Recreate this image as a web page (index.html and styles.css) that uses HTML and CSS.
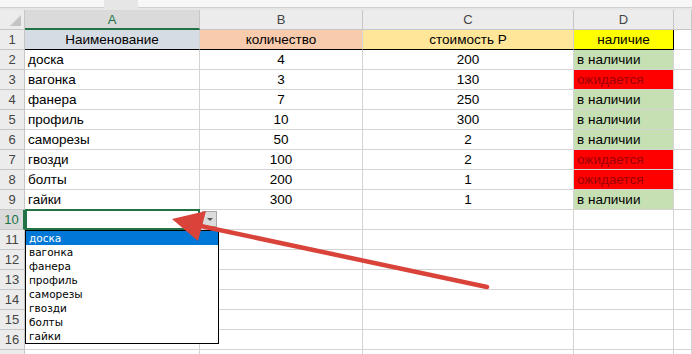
FILE: index.html
```html
<!DOCTYPE html>
<html>
<head>
  <title>Материалы</title>
  <link rel="stylesheet" href="styles.css">
</head>
<body>
  <div class="formula-bar">
    <div class="name-box"></div>
    <div class="formula-input"></div>
  </div>

  <div class="sheet">
    <!-- column headers -->
    <div class="corner"><span class="select-all"></span></div>
    <div class="col-head selected">A</div>
    <div class="col-head">B</div>
    <div class="col-head">C</div>
    <div class="col-head">D</div>
    <div class="col-head"></div>

    <div class="row-head">1</div>
    <div class="cell center head-a">Наименование</div>
    <div class="cell center head-b">количество</div>
    <div class="cell center head-c">стоимость Р</div>
    <div class="cell center head-d">наличие</div>
    <div class="cell"></div>

    <div class="row-head">2</div>
    <div class="cell">доска</div>
    <div class="cell center">4</div>
    <div class="cell center">200</div>
    <div class="cell ok">в наличии</div>
    <div class="cell"></div>

    <div class="row-head">3</div>
    <div class="cell">вагонка</div>
    <div class="cell center">3</div>
    <div class="cell center">130</div>
    <div class="cell wait">ожидается</div>
    <div class="cell"></div>

    <div class="row-head">4</div>
    <div class="cell">фанера</div>
    <div class="cell center">7</div>
    <div class="cell center">250</div>
    <div class="cell ok">в наличии</div>
    <div class="cell"></div>

    <div class="row-head">5</div>
    <div class="cell">профиль</div>
    <div class="cell center">10</div>
    <div class="cell center">300</div>
    <div class="cell ok">в наличии</div>
    <div class="cell"></div>

    <div class="row-head">6</div>
    <div class="cell">саморезы</div>
    <div class="cell center">50</div>
    <div class="cell center">2</div>
    <div class="cell ok">в наличии</div>
    <div class="cell"></div>

    <div class="row-head">7</div>
    <div class="cell">гвозди</div>
    <div class="cell center">100</div>
    <div class="cell center">2</div>
    <div class="cell wait">ожидается</div>
    <div class="cell"></div>

    <div class="row-head">8</div>
    <div class="cell">болты</div>
    <div class="cell center">200</div>
    <div class="cell center">1</div>
    <div class="cell wait">ожидается</div>
    <div class="cell"></div>

    <div class="row-head">9</div>
    <div class="cell">гайки</div>
    <div class="cell center">300</div>
    <div class="cell center">1</div>
    <div class="cell ok">в наличии</div>
    <div class="cell"></div>

    <div class="row-head selected">10</div>
    <div class="cell active"></div>
    <div class="cell"></div>
    <div class="cell"></div>
    <div class="cell"></div>
    <div class="cell"></div>

    <div class="row-head">11</div>
    <div class="cell"></div><div class="cell"></div><div class="cell"></div><div class="cell"></div><div class="cell"></div>
    <div class="row-head">12</div>
    <div class="cell"></div><div class="cell"></div><div class="cell"></div><div class="cell"></div><div class="cell"></div>
    <div class="row-head">13</div>
    <div class="cell"></div><div class="cell"></div><div class="cell"></div><div class="cell"></div><div class="cell"></div>
    <div class="row-head">14</div>
    <div class="cell"></div><div class="cell"></div><div class="cell"></div><div class="cell"></div><div class="cell"></div>
    <div class="row-head">15</div>
    <div class="cell"></div><div class="cell"></div><div class="cell"></div><div class="cell"></div><div class="cell"></div>
    <div class="row-head">16</div>
    <div class="cell"></div><div class="cell"></div><div class="cell"></div><div class="cell"></div><div class="cell"></div>
    <div class="row-head"></div>
    <div class="cell"></div><div class="cell"></div><div class="cell"></div><div class="cell"></div><div class="cell"></div>

    <!-- validation dropdown on A10 -->
    <div class="drop-btn"><span class="caret"></span></div>
    <ul class="drop-list">
      <li class="hover">доска</li>
      <li>вагонка</li>
      <li>фанера</li>
      <li>профиль</li>
      <li>саморезы</li>
      <li>гвозди</li>
      <li>болты</li>
      <li>гайки</li>
    </ul>
  </div>

  <svg class="arrow" width="692" height="354" viewBox="0 0 692 354">
    <line x1="487" y1="287" x2="196" y2="225" stroke="#d9433a" stroke-width="4.5" stroke-linecap="round"/>
    <polygon points="172,219 206,211 198,241" fill="#d9433a"/>
  </svg>
</body>
</html>
```

FILE: styles.css
```css
body {
  margin: 0;
  background: #fff;
  font-family: "Liberation Sans", Arial, sans-serif;
  overflow: hidden;
}

.formula-bar {
  height: 10px;
  background: #e6e6e6;
  display: flex;
  gap: 34px;
}

.name-box,
.formula-input {
  height: 7px;
  background: #f7f7f7;
  border-bottom: 1px solid #d0d0d0;
}

.name-box {
  width: 104px;
}

.formula-input {
  flex: 1;
}

.sheet {
  position: relative;
  display: grid;
  grid-template-columns: 25px 175px 163px 211px 100px 1fr;
  grid-auto-rows: 20px;
  font-size: 13.5px;
  color: #000;
}

.corner,
.col-head,
.row-head {
  background: #ececec;
  color: #444;
  font-size: 13px;
  border-right: 1px solid #c6c6c6;
  border-bottom: 1px solid #c6c6c6;
  box-sizing: border-box;
  display: flex;
  align-items: center;
  justify-content: center;
}

.corner {
  position: relative;
}

.select-all {
  position: absolute;
  right: 3px;
  bottom: 3px;
  width: 0;
  height: 0;
  border-left: 11px solid transparent;
  border-bottom: 11px solid #c4c4c4;
}

.col-head.selected {
  background: #dadada;
  color: #217346;
  border-bottom: 2px solid #217346;
}

.row-head.selected {
  background: #dadada;
  color: #217346;
  border-right: 2px solid #217346;
}

.cell {
  border-right: 1px solid #d4d4d4;
  border-bottom: 1px solid #d4d4d4;
  box-sizing: border-box;
  padding: 0 3px;
  display: flex;
  align-items: center;
  white-space: nowrap;
}

.center {
  justify-content: center;
}

.head-a,
.head-b,
.head-c,
.head-d {
  border-bottom: 1px solid #000;
}

.head-a { background: #d6dce4; }
.head-b { background: #f8cbad; }
.head-c { background: #ffe699; }

.head-d {
  background: #ffff00;
  border-right: 1px solid #000;
}

.ok {
  background: #c6e0b4;
}

.wait {
  background: #ff0000;
  color: #9c0006;
}

.active {
  border: 2px solid #217346;
  margin: -1px 0 0 0;
  height: 21px;
}

.drop-btn {
  position: absolute;
  left: 202px;
  top: 201px;
  width: 15px;
  height: 16px;
  box-sizing: border-box;
  background: #dcdcdc;
  border: 1px solid #a8a8a8;
  display: flex;
  align-items: center;
  justify-content: center;
}

.caret {
  width: 0;
  height: 0;
  border-left: 3px solid transparent;
  border-right: 3px solid transparent;
  border-top: 3px solid #555;
}

.drop-list {
  position: absolute;
  left: 25px;
  top: 220px;
  width: 192px;
  margin: 0;
  padding: 0;
  list-style: none;
  background: #fff;
  border: 1px solid #000;
  font-family: "DejaVu Sans", Tahoma, sans-serif;
  font-size: 10.5px;
}

.drop-list li {
  height: 14px;
  line-height: 14px;
  padding-left: 3px;
}

.drop-list li.hover {
  background: #0078d7;
  color: #fff;
}

.arrow {
  position: absolute;
  left: 0;
  top: 0;
  pointer-events: none;
}
```
